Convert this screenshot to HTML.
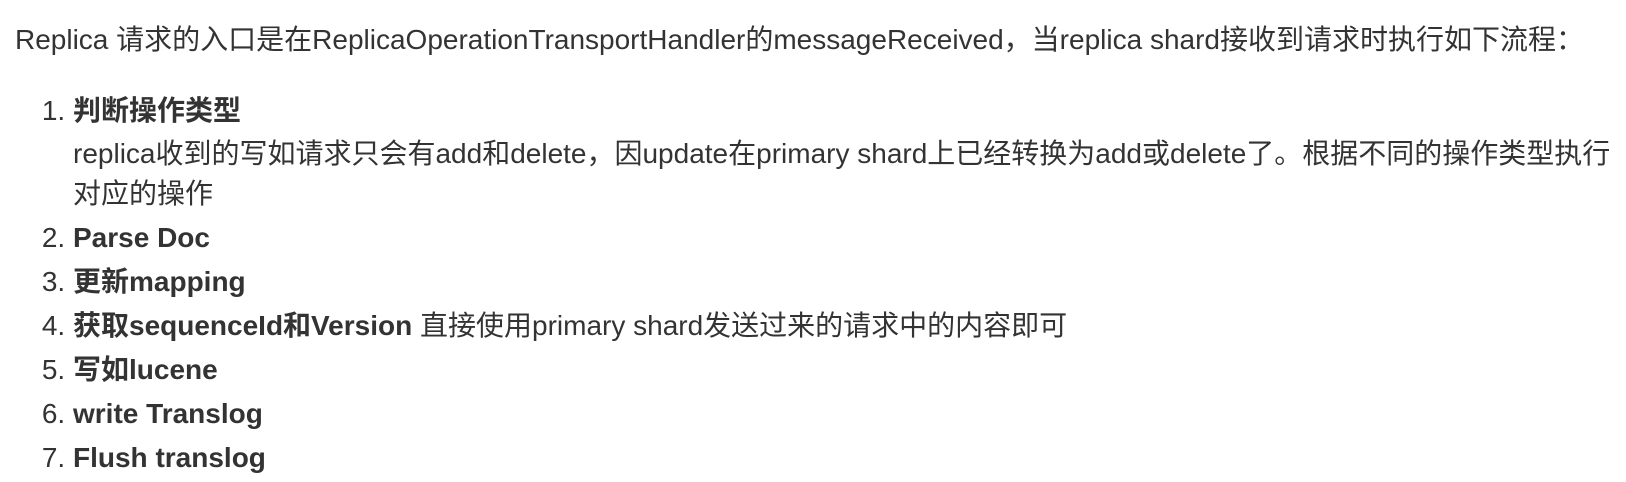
<!DOCTYPE html>
<html><head><meta charset="utf-8"><style>
html,body{margin:0;padding:0;background:#fff;width:1626px;height:476px;overflow:hidden}
body{font-family:"Liberation Sans","Noto Sans CJK SC",sans-serif;font-size:28px;color:#333;}
p{position:absolute;left:15px;top:20px;margin:0;line-height:40px;white-space:nowrap}
ol{position:absolute;left:0;top:91px;margin:0;padding-left:73px;width:1553px;line-height:40px}
li{margin-bottom:4px}
li .d{display:block;margin-top:3px}
b{font-weight:bold;color:#333}
</style></head><body>
<p>Replica 请求的入口是在ReplicaOperationTransportHandler的messageReceived，当replica shard接收到请求时执行如下流程：</p>
<ol>
<li><b>判断操作类型</b><span class="d">replica收到的写如请求只会有add和delete，因update在primary shard上已经转换为add或delete了。根据不同的操作类型执行对应的操作</span></li>
<li><b>Parse Doc</b></li>
<li><b>更新mapping</b></li>
<li><b>获取sequenceId和Version</b> 直接使用primary shard发送过来的请求中的内容即可</li>
<li><b>写如lucene</b></li>
<li><b>write Translog</b></li>
<li><b>Flush translog</b></li>
</ol>
</body></html>
